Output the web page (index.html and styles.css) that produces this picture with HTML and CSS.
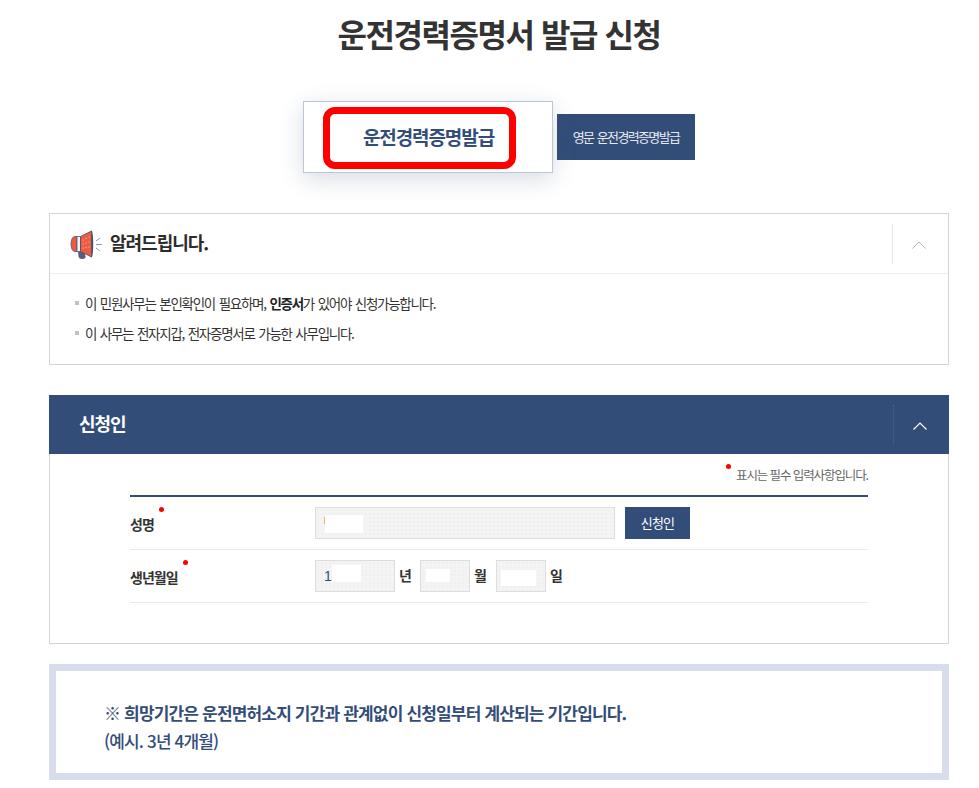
FILE: index.html
```html
<!DOCTYPE html>
<html lang="ko">
<head>
<meta charset="utf-8">
<title>운전경력증명서 발급 신청</title>
<link rel="stylesheet" href="styles.css">
</head>
<body>
<main class="page">
  <h1 class="title">운전경력증명서 발급 신청</h1>
  <div class="tabs">
    <a class="tab tab-active">운전경력증명발급<span class="highlight"></span></a>
    <a class="tab tab-other">영문 운전경력증명발급</a>
  </div>

  <section class="notice">
    <header class="notice-head">
      <svg class="megaphone" width="34" height="30" viewBox="0 0 34 30" aria-hidden="true">
        <path d="M8 22l6 0 1.500 5c.5 2-1 3-3 3h-1c-1.500 0-2.500-1-3-2.500z" fill="#56617d"/>
        <path d="M7 7.500H5C2.500 7.500 1 11 1 15s1.500 7.500 4 7.500h2z" fill="#ea5a3c" stroke="#4a5a7c" stroke-width=".8"/>
        <path d="M7 7.500h3.500v15H7z" fill="#f3f3f3" stroke="#4a5a7c" stroke-width=".8"/>
        <path d="M10.500 7.500L21.500 2v26L10.500 22.500z" fill="#ee5b3d" stroke="#3f5078" stroke-width=".8"/>
        <path d="M21.500 1.500c1 0 1.700 6 1.700 13.500s-.7 13.500-1.700 13.500z" fill="#3f5078"/>
        <path d="M13 11v.1M16 9.500v.1M19 8v.1M13 15v.1M16 14v.1M19 13v.1M13 19v.1M16 18.500v.1M19 18v.1" stroke="#ffd9cf" stroke-width="1" stroke-linecap="round"/>
        <path d="M26 12l4-3M26 15.500h6M26 19l4 3" stroke="#8f9bb2" stroke-width="1" fill="none"/>
      </svg>
      <h2 class="notice-title">알려드립니다.</h2>
      <span class="toggle toggle-light">
        <svg width="14" height="8" viewBox="0 0 14 8" aria-hidden="true"><path d="M.5 7.500L7 1l6.500 6.500" fill="none" stroke="#aeb3bb" stroke-width="1"/></svg>
      </span>
    </header>
    <ul class="notice-list">
      <li>이 민원사무는 본인확인이 필요하며, <b>인증서</b>가 있어야 신청가능합니다.</li>
      <li>이 사무는 전자지갑, 전자증명서로 가능한 사무입니다.</li>
    </ul>
  </section>

  <section class="applicant">
    <header class="applicant-head">
      <h2 class="applicant-title">신청인</h2>
      <span class="toggle toggle-dark">
        <svg width="14" height="8" viewBox="0 0 14 8" aria-hidden="true"><path d="M.5 7.500L7 1l6.500 6.500" fill="none" stroke="#fff" stroke-width="1.200"/></svg>
      </span>
    </header>
    <div class="applicant-body">
      <p class="hint"><i class="dot dot-hint"></i>표시는 필수 입력사항입니다.</p>
      <div class="form">
        <div class="row">
          <span class="label">성명<i class="dot dot-name"></i></span>
          <span class="field field-name"><i class="tick"></i><i class="mask mask-name"></i></span>
          <a class="btn-applicant">신청인</a>
        </div>
        <div class="row">
          <span class="label">생년월일<i class="dot dot-birth"></i></span>
          <span class="field field-year">1<i class="mask mask-year"></i></span>
          <span class="unit">년</span>
          <span class="field field-md"><i class="mask mask-month"></i></span>
          <span class="unit">월</span>
          <span class="field field-md"><i class="mask mask-day"></i></span>
          <span class="unit">일</span>
        </div>
      </div>
    </div>
  </section>

  <section class="info">
    <p class="info-main">※ 희망기간은 운전면허소지 기간과 관계없이 신청일부터 계산되는 기간입니다.</p>
    <p class="info-sub">(예시. 3년 4개월)</p>
  </section>
</main>
</body>
</html>
```
FILE: styles.css
```css
* { box-sizing: border-box; }
html, body { margin: 0; padding: 0; background: #fff; }
body {
  font-family: "Noto Sans CJK KR", "Noto Sans", sans-serif;
  color: #333;
  overflow: hidden;
}
.page { width: 900px; margin-left: 49px; height: 788px; padding-top: 8px; }
h1, h2, p, ul { margin: 0; padding: 0; }
.title {
  font-size: 32px; line-height: 50px; font-weight: 700; text-align: center;
  letter-spacing: -1.45px; color: #333;
}
.tabs { display: flex; align-items: center; margin: 43px 0 0 254px; }
.tab { display: flex; align-items: center; justify-content: center; }
.tab-active {
  position: relative; width: 250px; height: 72px; padding: 0 0 2px 1px;
  border: 1px solid #bcc6d8; background: #fff;
  font-size: 19px; font-weight: 700; color: #334d79; letter-spacing: -1.1px;
  box-shadow: 0 6px 22px rgba(60, 80, 120, .2);
}
.highlight {
  position: absolute; left: 19px; top: 5px; width: 193px; height: 62px;
  border: 7px solid #f00; border-radius: 12px;
}
.tab-other {
  margin-left: 4px; width: 138px; height: 46px; padding-bottom: 1px; background: #334d79;
  color: #e6eaf2; font-size: 13px; letter-spacing: -1.65px; word-spacing: 1.5px;
}
.notice {
  margin-top: 40px; height: 152px; border: 1px solid #d5d5d5;
}
.notice-head {
  display: flex; align-items: center; height: 60px; padding-left: 20px;
  border-bottom: 1px solid #eee;
}
.megaphone { flex: none; }
.notice-title {
  font-size: 18px; font-weight: 700; margin-left: 6px; padding-bottom: 3px;
  letter-spacing: -1px; color: #2c2c2c;
}
.toggle {
  margin-left: auto; width: 56px; height: 40px; display: flex; align-items: center;
  justify-content: center; padding: 2px 4px 0 0;
}
.toggle-light { border-left: 1px solid #e6e6e6; }
.toggle-dark { border-left: 1px dotted #4f6690; padding-right: 3px; }
.notice-list { list-style: none; padding: 14px 0 0 35px; }
.notice-list li {
  position: relative; font-size: 13.500px; line-height: 30px;
  letter-spacing: -1.28px; word-spacing: 1.2px; color: #333; height: 30px;
}
.notice-list li::before {
  content: ""; position: absolute; left: -10px; top: 13px; width: 4px; height: 4px; background: #bcc2cc;
}
.notice-list b { font-weight: 700; color: #222; }
.applicant { margin-top: 30px; height: 249px; border: 1px solid #d5d5d5; border-top: 0; }
.applicant-head {
  display: flex; align-items: center; height: 59px; margin: 0 -1px; padding-left: 30px;
  background: #334d79;
}
.applicant-title {
  font-size: 18px; font-weight: 700; color: #fff; letter-spacing: -1px; padding-bottom: 3px;
}
.applicant-body { padding: 0 80px; position: relative; }
.hint {
  height: 41px; padding-top: 11px; text-align: right; font-size: 12.500px; line-height: 20px;
  letter-spacing: -1.1px; color: #666; position: relative;
}
.dot { position: absolute; width: 5px; height: 5px; border-radius: 50%; background: #f00; }
.dot-hint { right: 137px; top: 10px; }
.form { border-top: 2px solid #334d79; }
.row {
  display: flex; align-items: center; height: 53px; border-bottom: 1px solid #eaeaea;
}
.label {
  position: relative; width: 185px; flex: none; font-size: 14px; font-weight: 700;
  letter-spacing: -1px; color: #333; padding-top: 1px;
}
.dot-name { left: 29px; top: -6px; }
.dot-birth { left: 53px; top: -6px; }
.field {
  position: relative; display: block; height: 32px; border: 1px solid #ddd;
  background-color: #f4f4f4;
  background-image: radial-gradient(#f0f0f0 1px, transparent 1px);
  background-size: 4px 4px;
  font-family: "Liberation Sans", sans-serif;
  font-size: 14px; line-height: 30px; padding-left: 8px; color: #334d79;
}
.field-name { width: 300px; }
.field-year { width: 80px; }
.field-md { width: 50px; }
.mask { position: absolute; background: #fff; }
.tick { position: absolute; left: 8px; top: 9px; width: 1px; height: 7px; background: #e8b070; }
.mask-name { left: 9px; top: 7px; width: 38px; height: 18px; }
.mask-year { left: 16px; top: 4px; width: 29px; height: 17px; }
.mask-month { left: 5px; top: 8px; width: 24px; height: 13px; }
.mask-day { left: 4px; top: 9px; width: 35px; height: 16px; }
.btn-applicant {
  display: flex; align-items: center; justify-content: center;
  width: 65px; height: 32px; margin-left: 10px; background: #334d79;
  color: #fff; font-size: 13px; letter-spacing: -0.8px; padding-bottom: 1px;
}
.unit {
  font-size: 14px; font-weight: 700; color: #333; width: 25px;
  padding: 0 0 2px 4px; flex: none;
}
.field-md + .unit { width: 26px; padding-left: 4px; }
.info {
  margin-top: 20px; height: 116px; border: 7px solid #d7dded; padding: 28px 0 0 48px;
  color: #334d79; font-size: 17px; letter-spacing: -0.83px;
}
.info-main { font-weight: 700; line-height: 28px; }
.info-sub { font-weight: 500; line-height: 28px; }
```
